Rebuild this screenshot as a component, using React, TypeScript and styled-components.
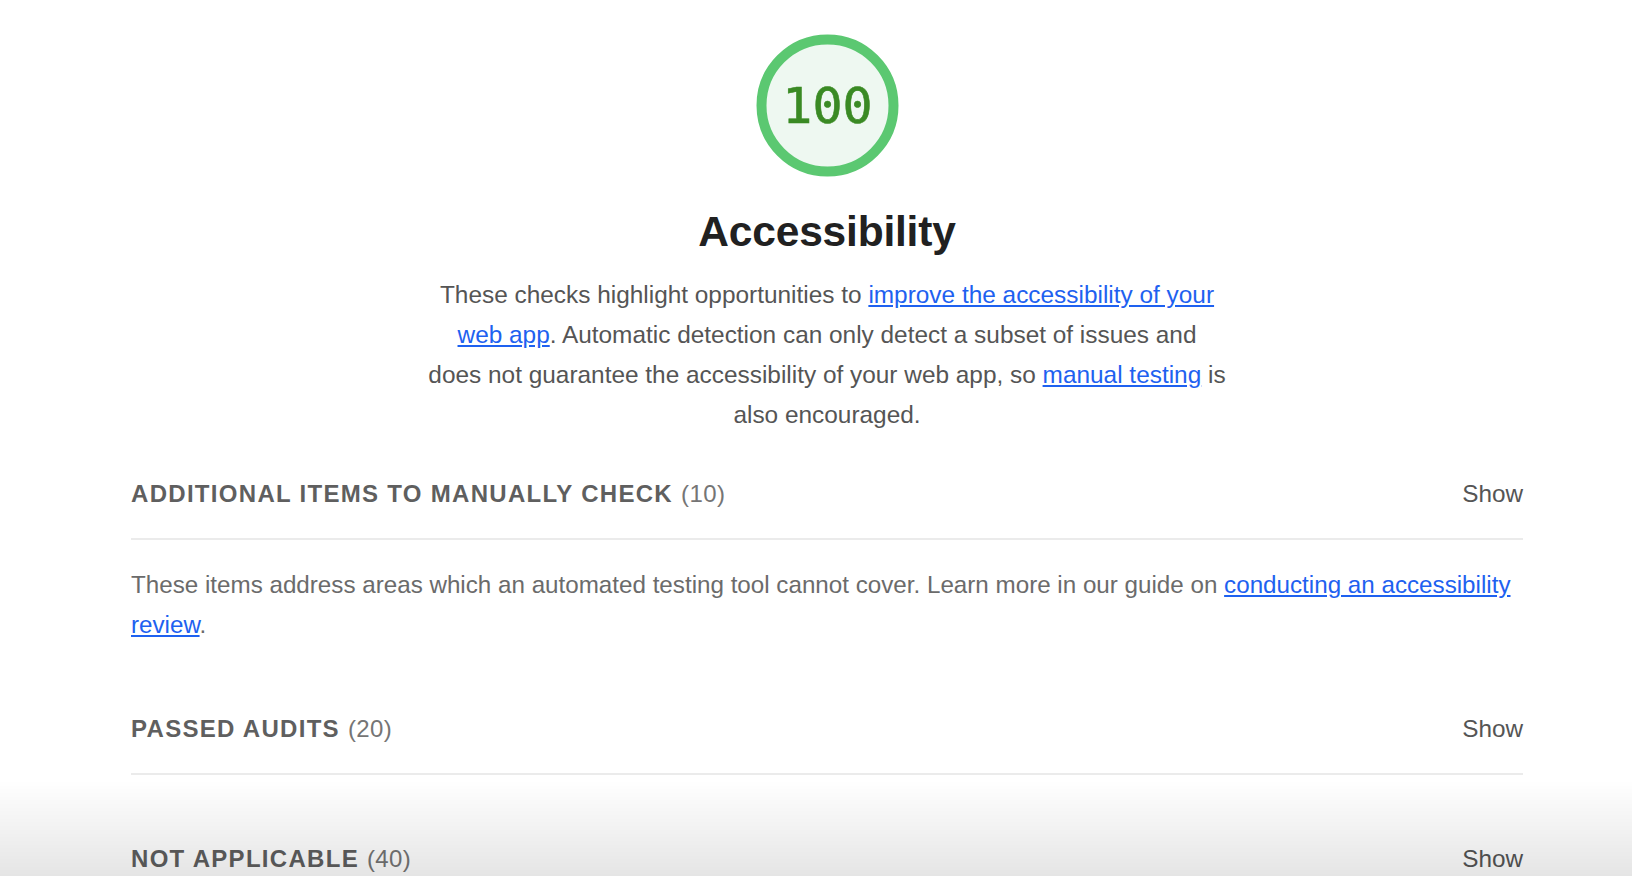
import React from "react";
import styled, { createGlobalStyle } from "styled-components";

const Global = createGlobalStyle`
  html, body { margin: 0; padding: 0; background: #ffffff; }
  body { font-family: "Liberation Sans", Arial, Helvetica, sans-serif; color: #212121; }
`;

const Page = styled.div`
  width: 1392px;
  padding-left: 131px;
  padding-top: 34px;
  box-sizing: content-box;
`;

const Header = styled.header`
  display: flex;
  flex-direction: column;
  align-items: center;
`;

const GaugeWrap = styled.div`
  width: 143px;
  height: 143px;
`;

const Title = styled.h1`
  margin: 31px 0 0;
  font-size: 42.5px;
  line-height: 48px;
  font-weight: 700;
  color: #212121;
  letter-spacing: -0.2px;
`;

const Description = styled.p`
  margin: 19px 0 0;
  max-width: 812px;
  text-align: center;
  font-size: 24.4px;
  line-height: 40px;
  color: #555555;
`;

const Link = styled.a`
  color: #1e61f0;
  text-decoration: underline;
  text-underline-offset: 2px;
`;

const Sections = styled.div`
  margin-top: 39px;
  display: flex;
  flex-direction: column;
`;

const Group = styled.section<{ $first?: boolean }>`
  margin-top: ${(p) => (p.$first ? "0" : "64px")};
`;

const GroupHeader = styled.div`
  display: flex;
  align-items: center;
  justify-content: space-between;
  padding-bottom: 24px;
  border-bottom: 2px solid #ebebeb;
  line-height: 40px;
`;

const GroupTitle = styled.h2`
  margin: 0;
  font-size: 24px;
  font-weight: 700;
  letter-spacing: 1.3px;
  text-transform: uppercase;
  color: #5f5f5f;
`;

const Count = styled.span`
  font-weight: 400;
  letter-spacing: 0.4px;
  color: #757575;
`;

const ShowButton = styled.button`
  border: none;
  background: none;
  padding: 0;
  font-family: inherit;
  font-size: 24.3px;
  line-height: 40px;
  color: #555555;
  cursor: pointer;
`;

const GroupDescription = styled.p`
  margin: 25px 0 0;
  font-size: 24.2px;
  line-height: 40px;
  color: #6b6b6b;
`;

const BottomFade = styled.div`
  position: fixed;
  left: 0;
  right: 0;
  bottom: 0;
  height: 96px;
  pointer-events: none;
  background: linear-gradient(to bottom, rgba(0, 0, 0, 0) 0%, rgba(0, 0, 0, 0.1) 100%);
`;

function Gauge({ score }: { score: number }) {
  return (
    <GaugeWrap>
      <svg width="143" height="143" viewBox="0 0 143 143">
        <circle cx="71.5" cy="71.5" r="66" fill="#eef8f1" stroke="#5bc871" strokeWidth="10" />
        <text
          x="71.5"
          y="72"
          textAnchor="middle"
          dominantBaseline="central"
          fontFamily='"DejaVu Sans Mono", monospace'
          fontSize="50"
          fill="#3a8a24"
          stroke="#3a8a24"
          strokeWidth="0.6"
        >
          {score}
        </text>
      </svg>
    </GaugeWrap>
  );
}

const groups = [
  { title: "Additional items to manually check", count: 10, desc: true },
  { title: "Passed audits", count: 20, desc: false },
  { title: "Not applicable", count: 40, desc: false },
];

export default function App() {
  return (
    <>
      <Global />
      <Page>
        <Header>
          <Gauge score={100} />
          <Title>Accessibility</Title>
          <Description>
            These checks highlight opportunities to{" "}
            <Link href="#">improve the accessibility of your web app</Link>. Automatic detection can only
            detect a subset of issues and
            <br />
            does not guarantee the accessibility of your web app, so <Link href="#">manual testing</Link> is
            also encouraged.
          </Description>
        </Header>
        <Sections>
          {groups.map((g, i) => (
            <Group key={g.title} $first={i === 0}>
              <GroupHeader>
                <GroupTitle>
                  {g.title} <Count>({g.count})</Count>
                </GroupTitle>
                <ShowButton>Show</ShowButton>
              </GroupHeader>
              {g.desc && (
                <GroupDescription>
                  These items address areas which an automated testing tool cannot cover. Learn more in our
                  guide on <Link href="#">conducting an accessibility review</Link>.
                </GroupDescription>
              )}
            </Group>
          ))}
        </Sections>
      </Page>
      <BottomFade />
    </>
  );
}
